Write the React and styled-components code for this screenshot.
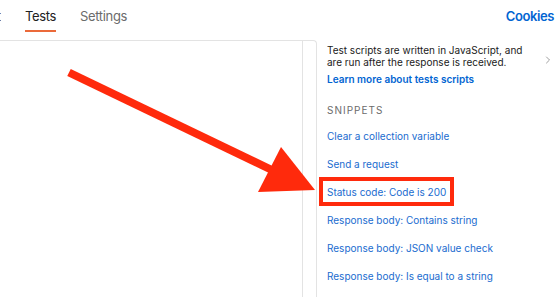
import React from "react";
import styled, { createGlobalStyle } from "styled-components";
import { ChevronRight } from "lucide-react";

const Global = createGlobalStyle`
  html, body { margin: 0; padding: 0; background: #fff; }
  body {
    width: 557px; height: 297px; overflow: hidden;
    font-family: Inter, "Noto Sans", "Liberation Sans", sans-serif;
    -webkit-font-smoothing: antialiased;
  }
`;

const Page = styled.div`
  position: relative;
  width: 557px;
  height: 297px;
  display: flex;
  flex-direction: column;
`;

const Header = styled.div`
  height: 40px;
  display: flex;
  align-items: stretch;
  justify-content: space-between;
`;

const Tabs = styled.div`
  display: flex;
  align-items: stretch;
  gap: 24px;
`;

const ClippedTab = styled.div`
  width: 1px;
  overflow: hidden;
  display: flex;
  justify-content: flex-end;
  align-items: center;
  padding-bottom: 8px;
  font-size: 13px;
  letter-spacing: -0.35px;
  color: #6b6b6b;
  white-space: nowrap;
`;

const Tab = styled.div`
  position: relative;
  display: flex;
  align-items: center;
  padding-bottom: 8px;
  font-size: 13px;
  letter-spacing: -0.35px;
  color: ${(p) => (p.$active ? "#212121" : "#6b6b6b")};
  white-space: nowrap;
  &::after {
    content: "";
    display: ${(p) => (p.$active ? "block" : "none")};
    position: absolute;
    left: 0;
    right: 0;
    top: 30px;
    height: 2px;
    background: #eb6a3a;
  }
`;

const CookiesLink = styled.div`
  display: flex;
  align-items: center;
  padding-right: 3px;
  padding-bottom: 8px;
  font-size: 13px;
  letter-spacing: -0.4px;
  font-weight: 600;
  color: #0265d2;
`;

const Body = styled.div`
  flex: 1;
  display: flex;
  min-height: 0;
`;

const EditorFrame = styled.div`
  width: 316px;
  display: flex;
  border-top: 1px solid #e3e3e3;
  border-right: 1px solid #e3e3e3;
  border-top-right-radius: 4px;
`;

const Editor = styled.div`
  width: 302px;
  border-right: 1px solid #e3e3e3;
`;

const Sidebar = styled.aside`
  flex: 1;
  min-width: 0;
  display: flex;
  flex-direction: column;
  padding: 5px 3px 0 10px;
`;

const IntroRow = styled.div`
  display: flex;
  align-items: flex-start;
  justify-content: space-between;
`;

const Intro = styled.div`
  display: flex;
  flex-direction: column;
`;

const Description = styled.p`
  margin: 0;
  font-size: 10px;
  line-height: 11.5px;
  color: #212121;
  white-space: nowrap;
`;

const LearnMore = styled.a`
  margin-top: 4.5px;
  font-size: 10px;
  line-height: 13px;
  font-weight: 600;
  color: #0265d2;
  text-decoration: none;
`;

const Chevron = styled.span`
  display: flex;
  flex-shrink: 0;
  margin-top: 9px;
  color: #6b6b6b;
`;

const SectionLabel = styled.div`
  margin-top: 17.5px;
  font-size: 10px;
  line-height: 14px;
  letter-spacing: 1px;
  text-transform: uppercase;
  color: #6b6b6b;
`;

const SnippetList = styled.ul`
  list-style: none;
  margin: 5px 0 0;
  padding: 0;
  display: flex;
  flex-direction: column;
`;

const Snippet = styled.li`
  height: 28px;
  display: flex;
  align-items: center;
`;

const SnippetLink = styled.span`
  position: relative;
  font-size: 10px;
  line-height: 14px;
  color: #1a6ccf;
  white-space: nowrap;
  &::after {
    content: "";
    display: ${(p) => (p.$highlighted ? "block" : "none")};
    position: absolute;
    top: -8px;
    bottom: -7px;
    left: -8px;
    right: -8px;
    border: 4px solid #ff2a0c;
  }
`;

const ArrowLayer = styled.svg`
  position: absolute;
  top: 0;
  left: 0;
  pointer-events: none;
`;

const snippets = [
  "Clear a collection variable",
  "Send a request",
  "Status code: Code is 200",
  "Response body: Contains string",
  "Response body: JSON value check",
  "Response body: Is equal to a string",
];

export default function App() {
  return (
    <>
      <Global />
      <Page>
        <Header>
          <Tabs>
            <ClippedTab>Pre-request Script</ClippedTab>
            <Tab $active>Tests</Tab>
            <Tab>Settings</Tab>
          </Tabs>
          <CookiesLink>Cookies</CookiesLink>
        </Header>
        <Body>
          <EditorFrame>
            <Editor />
          </EditorFrame>
          <Sidebar>
            <IntroRow>
              <Intro>
                <Description>
                  Test scripts are written in JavaScript, and
                  <br />
                  are run after the response is received.
                </Description>
                <LearnMore>Learn more about tests scripts</LearnMore>
              </Intro>
              <Chevron>
                <ChevronRight size={12} strokeWidth={1.3} />
              </Chevron>
            </IntroRow>
            <SectionLabel>Snippets</SectionLabel>
            <SnippetList>
              {snippets.map((s) => (
                <Snippet key={s}>
                  <SnippetLink $highlighted={s === "Status code: Code is 200"}>
                    {s}
                  </SnippetLink>
                </Snippet>
              ))}
            </SnippetList>
          </Sidebar>
        </Body>
        <ArrowLayer width="557" height="297" viewBox="0 0 557 297">
          <line
            x1="69"
            y1="72.5"
            x2="276"
            y2="172"
            stroke="#ff2a0c"
            strokeWidth="8"
          />
          <polygon points="281,147 258,192 315,190" fill="#ff2a0c" />
        </ArrowLayer>
      </Page>
    </>
  );
}
